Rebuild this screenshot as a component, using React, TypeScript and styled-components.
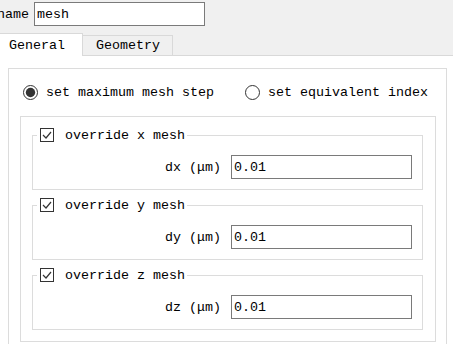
import React from 'react';
import styled, { createGlobalStyle } from 'styled-components';

const GlobalStyle = createGlobalStyle`
  html, body {
    margin: 0;
    padding: 0;
    background: #f0f0f0;
    overflow: hidden;
  }
  body {
    font-family: "Liberation Mono", "Noto Sans CJK SC", monospace;
    font-size: 13.33px;
    color: #000;
  }
`;

const NameRow = styled.div`
  display: flex;
  align-items: center;
  padding-top: 2px;
  height: 24px;
`;

const NameLabel = styled.label`
  margin-left: -3px;
  width: 32px;
  margin-right: 5px;
  white-space: nowrap;
`;

const TextField = styled.input<{ $width: number }>`
  box-sizing: border-box;
  width: ${p => p.$width}px;
  height: 24px;
  border: 1px solid #7a7a7a;
  padding: 0 2px;
  margin: 0;
  font: inherit;
  color: #000;
  background: #fff;
  outline: none;
`;

const TabBar = styled.div`
  display: flex;
  align-items: flex-end;
  margin-top: 7px;
  margin-left: -1px;
`;

const Tab = styled.div<{ $active?: boolean }>`
  box-sizing: border-box;
  display: flex;
  align-items: center;
  height: ${p => (p.$active ? 23 : 20)}px;
  margin-bottom: ${p => (p.$active ? -1 : 0)}px;
  padding: ${p => (p.$active ? '0 17px 0 9px' : '0 12px 0 13px')};
  border: 1px solid #d9d9d9;
  border-bottom: none;
  border-left: ${p => (p.$active ? '1px solid #d9d9d9' : 'none')};
  background: ${p => (p.$active ? '#fff' : '#f0f0f0')};
  position: relative;
  z-index: ${p => (p.$active ? 1 : 0)};
  white-space: nowrap;
`;

const Pane = styled.div`
  background: #fff;
  border-top: 1px solid #d9d9d9;
  padding: 12px 0 0 8px;
  min-height: 300px;
`;

const OuterBox = styled.div`
  box-sizing: border-box;
  width: 439px;
  border: 1px solid #dcdcdc;
  padding: 15px 0 11px 11px;
`;

const RadioRow = styled.div`
  display: flex;
  align-items: center;
  gap: 31px;
  height: 16px;
  padding-left: 3px;
`;

const RadioItem = styled.label`
  display: flex;
  align-items: center;
  gap: 8px;
  white-space: nowrap;
`;

const InnerBox = styled.div`
  box-sizing: border-box;
  width: 416px;
  margin-top: 16px;
  border: 1px solid #dcdcdc;
  padding: 10px 12px 11px 11px;
  display: flex;
  flex-direction: column;
  gap: 7px;
`;

const Group = styled.fieldset`
  margin: 0;
  padding: 0 10px 10px 0;
  border: 1px solid #dcdcdc;
  min-width: 0;
`;

const GroupTitle = styled.legend`
  display: flex;
  align-items: center;
  gap: 11px;
  height: 16px;
  margin-left: 4px;
  padding: 0 2px 0 3px;
  white-space: nowrap;
`;

const FieldRow = styled.div`
  display: flex;
  justify-content: flex-end;
  align-items: center;
  gap: 10px;
  margin-top: 12px;
`;

const Radio = ({ checked }: { checked?: boolean }) => (
  <svg width="15" height="15" viewBox="0 0 15 15">
    <circle cx="7.5" cy="7.5" r="7" fill="#fff" stroke="#333" strokeWidth="1" />
    {checked && <circle cx="7.5" cy="7.5" r="4.7" fill="#333" />}
  </svg>
);

const Check = () => (
  <svg width="14" height="14" viewBox="0 0 14 14">
    <rect x="0.5" y="0.5" width="13" height="13" fill="#fff" stroke="#333" />
    <path d="M3 7 L6 10 L11 4" fill="none" stroke="#333" strokeWidth="1.2" />
  </svg>
);

const axes = ['x', 'y', 'z'];

const App = () => {
  return (
    <>
      <GlobalStyle />
      <NameRow>
        <NameLabel>name</NameLabel>
        <TextField $width={171} defaultValue="mesh" />
      </NameRow>
      <TabBar>
        <Tab $active>General</Tab>
        <Tab>Geometry</Tab>
      </TabBar>
      <Pane>
        <OuterBox>
          <RadioRow>
            <RadioItem>
              <Radio checked />
              set maximum mesh step
            </RadioItem>
            <RadioItem>
              <Radio />
              set equivalent index
            </RadioItem>
          </RadioRow>
          <InnerBox>
            {axes.map(a => (
              <Group key={a}>
                <GroupTitle>
                  <Check />
                  override {a} mesh
                </GroupTitle>
                <FieldRow>
                  <span>d{a} (μm)</span>
                  <TextField $width={181} defaultValue="0.01" />
                </FieldRow>
              </Group>
            ))}
          </InnerBox>
        </OuterBox>
      </Pane>
    </>
  );
};

export default App;
